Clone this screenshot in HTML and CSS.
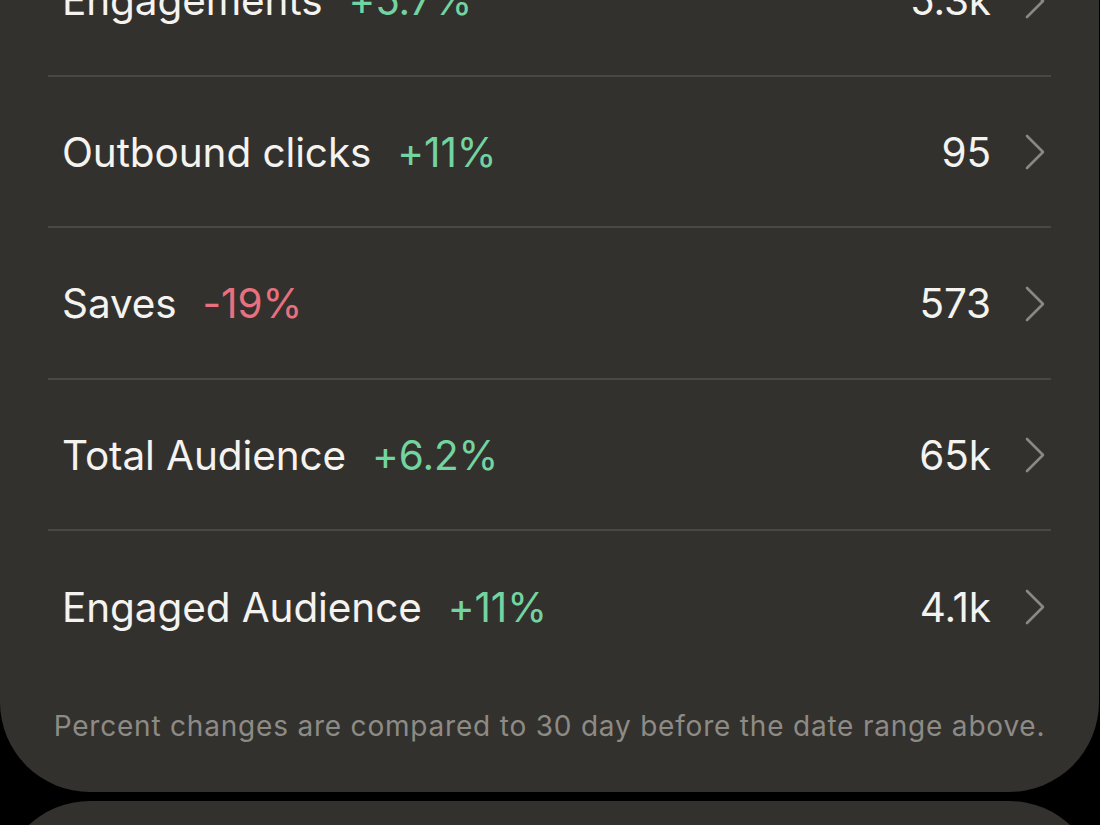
FILE: index.html
```html
<!DOCTYPE html>
<html lang="en">
<head>
<meta charset="utf-8">
<title>Overview metrics</title>
<link rel="stylesheet" href="styles.css">
</head>
<body>
<main class="screen">
  <section class="card metrics">
    <ul class="metric-list">
      <li class="metric">
        <span class="metric-name">Engagements</span>
        <span class="delta up">+5.7%</span>
        <span class="metric-value">5.3k</span>
        <svg class="chevron" viewBox="0 0 20 36" aria-hidden="true"><path d="M2 2 L18 18 L2 34"/></svg>
      </li>
      <li class="metric">
        <span class="metric-name">Outbound clicks</span>
        <span class="delta up">+11%</span>
        <span class="metric-value">95</span>
        <svg class="chevron" viewBox="0 0 20 36" aria-hidden="true"><path d="M2 2 L18 18 L2 34"/></svg>
      </li>
      <li class="metric">
        <span class="metric-name">Saves</span>
        <span class="delta down">-19%</span>
        <span class="metric-value">573</span>
        <svg class="chevron" viewBox="0 0 20 36" aria-hidden="true"><path d="M2 2 L18 18 L2 34"/></svg>
      </li>
      <li class="metric">
        <span class="metric-name">Total Audience</span>
        <span class="delta up">+6.2%</span>
        <span class="metric-value">65k</span>
        <svg class="chevron" viewBox="0 0 20 36" aria-hidden="true"><path d="M2 2 L18 18 L2 34"/></svg>
      </li>
      <li class="metric">
        <span class="metric-name">Engaged Audience</span>
        <span class="delta up">+11%</span>
        <span class="metric-value">4.1k</span>
        <svg class="chevron" viewBox="0 0 20 36" aria-hidden="true"><path d="M2 2 L18 18 L2 34"/></svg>
      </li>
    </ul>
    <p class="footnote">Percent changes are compared to 30 day before the date range above.</p>
  </section>
  <section class="card next"></section>
</main>
</body>
</html>
```

FILE: styles.css
```css
*, *::before, *::after {
  box-sizing: border-box;
}

html, body {
  margin: 0;
  padding: 0;
  background: #000;
  height: 100%;
  overflow: hidden;
}

.screen {
  display: flex;
  flex-direction: column;
  gap: 9px;
  font-family: Inter, "Noto Sans", sans-serif;
  color: #f4f3f0;
}

.card {
  background: #33312d;
  width: 1099px;
  border-radius: 90px;
  flex-shrink: 0;
}

/* the list is scrolled: its first row sits half above the fold */
.metrics {
  margin-top: -200px;
  padding: 125px 48px 46px;
}

.metric-list {
  list-style: none;
  margin: 0;
  padding: 0;
}

.metric {
  display: flex;
  align-items: center;
  height: 151.5px;
  padding: 2px 6px 0 14px;
  border-bottom: 2px solid #4a4845;
  font-size: 40.5px;
  letter-spacing: -0.1px;
}

.metric:last-child {
  border-bottom: none;
  height: 150px;
}

.metric-name {
  color: #f4f3f0;
}

.delta {
  margin-left: 26px;
}

.delta.up {
  color: #72d4a0;
}

.delta.down {
  color: #e8707f;
}

.metric-value {
  margin-left: auto;
  color: #f4f3f0;
}

.chevron {
  width: 20px;
  height: 36px;
  margin-left: 34px;
  flex-shrink: 0;
  fill: none;
  stroke: #8a8884;
  stroke-width: 2.6;
  stroke-linecap: round;
  stroke-linejoin: round;
}

.footnote {
  margin: 25px 0 0;
  text-align: center;
  font-size: 28px;
  line-height: 40px;
  letter-spacing: 0.8px;
  color: #8d8b86;
  white-space: nowrap;
}

.next {
  height: 200px;
}
```
